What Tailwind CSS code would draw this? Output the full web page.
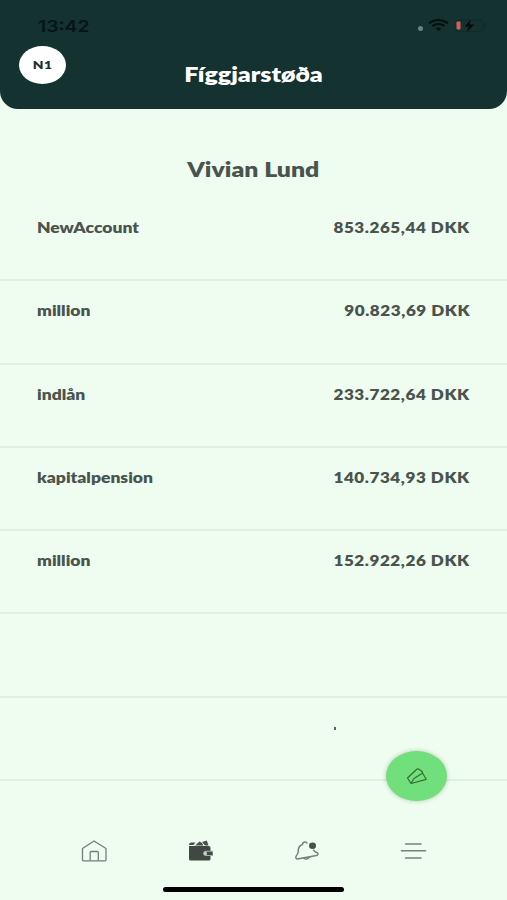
<!DOCTYPE html>
<html lang="fo">
<head>
<meta charset="utf-8">
<title>Fíggjarstøða</title>
<script src="https://cdn.jsdelivr.net/npm/@tailwindcss/browser@4"></script>
</head>
<body class="bg-[#effcf0]">
<div class="relative flex h-[900px] w-[507px] flex-col overflow-hidden bg-[#effcf0] font-['Lato',sans-serif] font-extrabold text-[#4a534d]">
  <header class="h-[109px] shrink-0 rounded-b-[18px] bg-[#133230]">
    <div class="flex h-[46px] items-start justify-between pl-[38px] pr-[20px] pt-[15px]">
      <span class="inline-block origin-left scale-x-[1.17] font-['Inter',sans-serif] text-[16.500px] font-semibold leading-[22px] text-[#061514]">13:42</span>
      <svg class="mt-px h-[20px] w-[76px]" viewBox="0 0 76 20" fill="none">
        <circle cx="9.500" cy="12.500" r="2.500" fill="#67857f"/>
        <g stroke="#041110" stroke-width="2.200">
          <path d="M18 7.200Q27 0.800 37 7.200"/>
          <path d="M21.500 10Q27.500 6 33.500 10"/>
        </g>
        <path d="M24.500 12.500Q27.500 10.300 30.500 12.500L27.500 15Z" fill="#041110"/>
        <rect x="45" y="4" width="27" height="11.500" rx="3" stroke="#0f2b29"/>
        <path d="M74 8v4" stroke="#0f2b29" stroke-width="1.500"/>
        <rect x="45.500" y="5.500" width="4" height="8" rx="1" fill="#d9605a"/>
        <path d="M60 3.500L53.500 10.500H58L55.500 16L63.500 8.500H58.500Z" fill="#020b0a"/>
      </svg>
    </div>
    <div class="grid grid-cols-[1fr_auto_1fr] items-start pl-[19px] pr-[19px]">
      <div class="flex h-[38px] w-[47px] items-center justify-center rounded-[50%] bg-white text-[12px] text-[#25302c]"><span class="inline-block scale-x-[1.15] tracking-[0.5px]">N1</span></div>
      <h1 class="mt-[16px] inline-block scale-x-[1.25] text-[20px] leading-[24px] text-white">Fíggjarstøða</h1>
    </div>
  </header>
  <main class="h-[693px] shrink-0">
    <h2 class="flex h-[89px] justify-center pt-[48px] text-[20px] leading-[24px]"><span class="inline-block scale-x-[1.24]">Vivian Lund</span></h2>
    <ul class="text-[14px] leading-[20px]">
      <li class="flex h-[83.300px] justify-between border-b-2 border-[#e0eee4] pl-[37px] pr-[37px] pt-[20px]"><span class="inline-block origin-left scale-x-[1.25]">NewAccount</span><span class="inline-block origin-right scale-x-[1.22] tracking-[0.450px]">853.265,44 DKK</span></li>
      <li class="flex h-[83.300px] justify-between border-b-2 border-[#e0eee4] pl-[37px] pr-[37px] pt-[20px]"><span class="inline-block origin-left scale-x-[1.25]">million</span><span class="inline-block origin-right scale-x-[1.22] tracking-[0.450px]">90.823,69 DKK</span></li>
      <li class="flex h-[83.300px] justify-between border-b-2 border-[#e0eee4] pl-[37px] pr-[37px] pt-[20px]"><span class="inline-block origin-left scale-x-[1.25]">indlån</span><span class="inline-block origin-right scale-x-[1.22] tracking-[0.450px]">233.722,64 DKK</span></li>
      <li class="flex h-[83.300px] justify-between border-b-2 border-[#e0eee4] pl-[37px] pr-[37px] pt-[20px]"><span class="inline-block origin-left scale-x-[1.25]">kapitalpension</span><span class="inline-block origin-right scale-x-[1.22] tracking-[0.450px]">140.734,93 DKK</span></li>
      <li class="flex h-[83.300px] justify-between border-b-2 border-[#e0eee4] pl-[37px] pr-[37px] pt-[20px]"><span class="inline-block origin-left scale-x-[1.25]">million</span><span class="inline-block origin-right scale-x-[1.22] tracking-[0.450px]">152.922,26 DKK</span></li>
      <li class="h-[83.300px] border-b-2 border-[#e0eee4]"></li>
      <li class="h-[83.300px] border-b-2 border-[#e0eee4]"></li>
    </ul>
  </main>
  <nav class="flex h-[98px] shrink-0 flex-col items-center justify-between pb-[8px] pt-[36px]">
    <div class="flex w-full justify-between pl-[80px] pr-[80px]">
      <svg class="h-[26px] w-[28px]" viewBox="0 0 28 26" fill="none" stroke="#6f8078" stroke-width="1.300" stroke-linejoin="round"><path d="M2.500 10.500L14 3L26 10.500V22Q26 22.800 25 22.800H3.500Q2.500 22.800 2.500 22Z"/><path d="M10.200 22.500V14.500Q10.200 13.500 11.200 13.500H17.300Q18.300 13.500 18.300 14.500V22.500"/></svg>
      <svg class="h-[26px] w-[28px]" viewBox="-2 0 28 26"><path d="M1 7Q1 4.800 3 4.500H7.500L5.500 7H1ZM7 7.500L11.500 3.500L14 5L15.500 7.500ZM14 4L18.800 2.500L20.500 7.500H17Z" fill="#46514a"/><path d="M1 8H20.500Q22.500 8 22.500 10V21Q22.500 22.500 21 22.500H2.500Q1 22.500 1 21Z" fill="#414843"/><path d="M25 12.800H17A2.800 2.800 0 0 0 17 18H25Z" fill="#a3aea7"/><path d="M18.500 13.800H24.500V17H18.500Z" fill="#414843"/><circle cx="17.300" cy="15.400" r="1.700" fill="#c5d0c8"/></svg>
      <svg class="h-[26px] w-[28px]" viewBox="-1 0 28 26" fill="none" stroke="#74837b" stroke-width="1.500" stroke-linejoin="round" stroke-linecap="round"><path d="M13 5Q12.500 3.600 10.500 4Q8.500 4.500 8.700 6.200Q4.500 8 4.300 12Q4.600 15.500 2.500 17.500Q0.800 20.500 3.200 21L22.500 17.500Q25 16.500 23.400 14.800Q20.300 13.800 19.600 12"/><path d="M9.500 20Q12.500 22.700 16 18.800"/><ellipse cx="18.500" cy="7.800" rx="3.500" ry="3.200" fill="#46514a" stroke="none"/></svg>
      <svg class="h-[26px] w-[28px]" viewBox="-.5 0 28 26" stroke="#74837b" stroke-width="1.500" stroke-linecap="round"><path d="M6 6H21.500M2 12.800H26M6 20H21.500"/></svg>
    </div>
    <div class="h-[5px] w-[181px] rounded-full bg-black"></div>
  </nav>
  <button class="absolute left-[386px] top-[751px] flex h-[50px] w-[61px] items-center justify-center rounded-[50%] bg-[#71df7b] shadow-[0_0_4px_rgba(40,80,50,0.3)]">
    <svg class="h-[18px] w-[22px]" viewBox="0 0 22 18" fill="none" stroke="#386b37" stroke-width="1.200" stroke-linejoin="round"><path d="M5 16.500L1.500 11L10.500 2.500Q11.500 1.500 13 2.200L16 4.500Q17 5.500 16 6.500L8 11.500L5 16.500L20.200 12.300L16.500 6"/></svg>
  </button>
  <span class="absolute left-[334px] top-[727px] h-[3px] w-[1.500px] bg-[#59635c]"></span>
</div>
</body>
</html>
